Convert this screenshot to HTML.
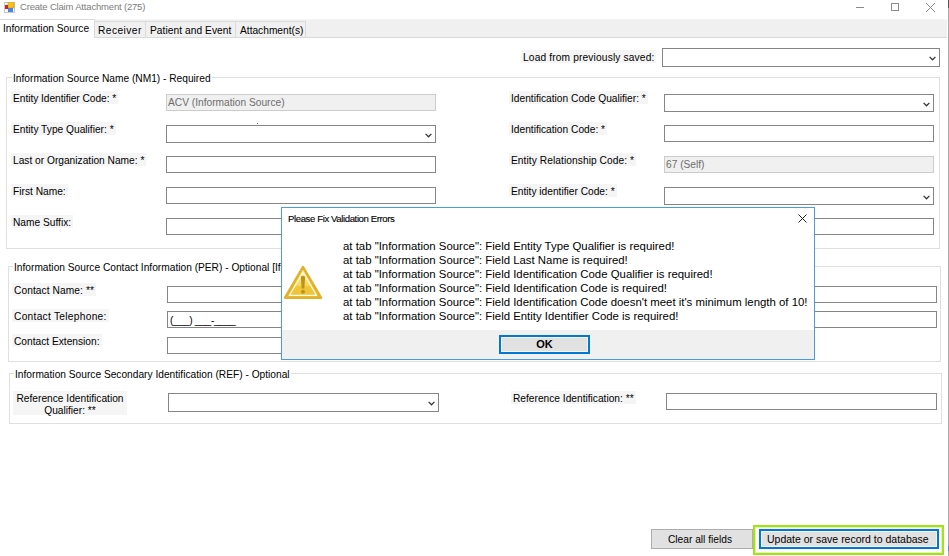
<!DOCTYPE html>
<html><head><meta charset="utf-8">
<style>
*{box-sizing:border-box;margin:0;padding:0}
html,body{width:949px;height:556px;overflow:hidden;background:#fff;font-family:"Liberation Sans",sans-serif;font-size:10.2px;color:#000}
.a{position:absolute}
.t{position:absolute;white-space:nowrap;line-height:12px}
.lbl{position:absolute;white-space:nowrap;line-height:12px;background:#f5f5f5;padding:2px 2px 0 2px;height:13px}
.tb{position:absolute;background:#fff;border:1px solid #858585}
.tbd{position:absolute;background:#f0f0f0;border:1px solid #cccccc;color:#6d6d6d;padding:2px 0 0 1px;line-height:12px;white-space:nowrap}
.cb{position:absolute;background:#fff;border:1px solid #858585}
.cb svg{position:absolute;right:3px;top:7px}
.gb{position:absolute;border:1px solid #dfdfdf}
.gt{position:absolute;background:#fff;padding:0 1px;white-space:nowrap;line-height:12px}
</style></head><body>
<!-- title bar -->
<svg class="a" style="left:4px;top:2px" width="11" height="11" viewBox="0 0 11 11">
<rect x="0.5" y="0.5" width="10" height="10" fill="#fafafa" stroke="#c8c8c8" stroke-width="1"/>
<rect x="4" y="0" width="6" height="6" fill="#f2c21a" stroke="#c9960c" stroke-width="0.6"/>
<rect x="1" y="3" width="3" height="4" fill="#c8261e"/>
<rect x="4" y="6" width="5" height="4" fill="#4a86e0"/>
</svg>
<div class="t" style="left:20px;top:1px;font-size:9.5px;color:#7d7d7d;letter-spacing:-0.18px">Create Claim Attachment (275)</div>
<div class="a" style="left:856px;top:7px;width:8px;height:1px;background:#8a8a8a"></div>
<div class="a" style="left:891px;top:3px;width:8px;height:8px;border:1px solid #8a8a8a"></div>
<svg class="a" style="left:926px;top:3px" width="9" height="9" viewBox="0 0 9 9"><path d="M0 0L9 9M9 0L0 9" stroke="#8a8a8a" stroke-width="1"/></svg>
<div class="a" style="left:948px;top:0;width:1px;height:556px;background:#a8a8a8"></div>
<div class="a" style="left:948px;top:546px;width:1px;height:5px;background:#5b8fc7"></div>
<div class="a" style="left:948px;top:0;width:1px;height:8px;background:#555"></div>

<!-- tab strip -->
<div class="a" style="left:0;top:19px;width:947px;height:19px;background:#f0f0f0;border-bottom:1px solid #dadada"></div>
<div class="a" style="left:0;top:19px;width:947px;height:1px;background:#f5f5f5"></div>
<div class="a" style="left:94px;top:21px;width:52px;height:17px;border:1px solid #dadada;border-bottom:none"></div>
<div class="a" style="left:145px;top:21px;width:91px;height:17px;border:1px solid #dadada;border-bottom:none"></div>
<div class="a" style="left:235px;top:21px;width:71px;height:17px;border:1px solid #dadada;border-bottom:none"></div>
<div class="a" style="left:0;top:19px;width:95px;height:19px;background:#fff;border:1px solid #dadada;border-bottom:none;border-left:none"></div>
<div class="t" style="left:3px;top:23px">Information Source</div>
<div class="t" style="left:98px;top:25px;letter-spacing:0.45px">Receiver</div>
<div class="t" style="left:150px;top:25px;letter-spacing:0.06px">Patient and Event</div>
<div class="t" style="left:240px;top:25px">Attachment(s)</div>

<!-- load -->
<div class="lbl" style="left:521px;top:50px;letter-spacing:0.15px">Load from previously saved:</div>
<div class="cb" style="left:662px;top:48px;width:278px;height:19px"><svg width="7" height="5" viewBox="0 0 7 5"><path d="M0.6 0.9L3.5 3.8L6.4 0.9" fill="none" stroke="#333" stroke-width="1.25"/></svg></div>

<!-- group 1 -->
<div class="gb" style="left:6px;top:77px;width:934px;height:172px"></div>
<div class="gt" style="left:12px;top:73px">Information Source Name (NM1) - Required</div>
<div class="lbl" style="left:11px;top:91px;letter-spacing:-0.04px">Entity Identifier Code: *</div>
<div class="lbl" style="left:11px;top:122px">Entity Type Qualifier: *</div>
<div class="lbl" style="left:11px;top:153px">Last or Organization Name: *</div>
<div class="lbl" style="left:11px;top:184px">First Name:</div>
<div class="lbl" style="left:11px;top:215px">Name Suffix:</div>
<div class="tbd" style="left:166px;top:94px;width:270px;height:17px">ACV (Information Source)</div>
<div class="cb" style="left:166px;top:125px;width:270px;height:18px"><svg width="7" height="5" viewBox="0 0 7 5"><path d="M0.6 0.9L3.5 3.8L6.4 0.9" fill="none" stroke="#333" stroke-width="1.25"/></svg></div>
<div class="a" style="left:257px;top:123px;width:1px;height:1px;background:#e33"></div>
<div class="tb" style="left:166px;top:156px;width:270px;height:17px"></div>
<div class="tb" style="left:166px;top:187px;width:270px;height:17px"></div>
<div class="tb" style="left:166px;top:218px;width:270px;height:17px"></div>

<div class="lbl" style="left:509px;top:91px">Identification Code Qualifier: *</div>
<div class="lbl" style="left:509px;top:122px">Identification Code: *</div>
<div class="lbl" style="left:509px;top:153px;letter-spacing:0.07px">Entity Relationship Code: *</div>
<div class="lbl" style="left:509px;top:184px">Entity identifier Code: *</div>
<div class="cb" style="left:664px;top:94px;width:270px;height:18px"><svg width="7" height="5" viewBox="0 0 7 5"><path d="M0.6 0.9L3.5 3.8L6.4 0.9" fill="none" stroke="#333" stroke-width="1.25"/></svg></div>
<div class="tb" style="left:664px;top:125px;width:270px;height:17px"></div>
<div class="tbd" style="left:664px;top:156px;width:270px;height:17px">67 (Self)</div>
<div class="cb" style="left:664px;top:187px;width:270px;height:18px"><svg width="7" height="5" viewBox="0 0 7 5"><path d="M0.6 0.9L3.5 3.8L6.4 0.9" fill="none" stroke="#333" stroke-width="1.25"/></svg></div>
<div class="tb" style="left:664px;top:218px;width:270px;height:17px"></div>

<!-- group 2 -->
<div class="gb" style="left:8px;top:266px;width:933px;height:96px"></div>
<div class="gt" style="left:13px;top:262px">Information Source Contact Information (PER) - Optional [If information is available]</div>
<div class="lbl" style="left:12px;top:283px;letter-spacing:0.08px">Contact Name: **</div>
<div class="lbl" style="left:12px;top:309px;letter-spacing:0.28px">Contact Telephone:</div>
<div class="lbl" style="left:12px;top:334px">Contact Extension:</div>
<div class="tb" style="left:167px;top:286px;width:270px;height:17px"></div>
<div class="tb" style="left:167px;top:311px;width:270px;height:17px;padding:3px 0 0 2px;line-height:12px;letter-spacing:-0.3px">(___) ___-____</div>
<div class="tb" style="left:167px;top:337px;width:270px;height:17px"></div>
<div class="tb" style="left:666px;top:286px;width:271px;height:17px"></div>
<div class="tb" style="left:666px;top:311px;width:271px;height:17px"></div>

<!-- group 3 -->
<div class="gb" style="left:9px;top:373px;width:933px;height:51px"></div>
<div class="gt" style="left:14px;top:369px">Information Source Secondary Identification (REF) - Optional</div>
<div class="lbl" style="left:13px;top:391px;width:114px;height:24px;text-align:center;white-space:normal;line-height:12.3px">Reference Identification<br>Qualifier: **</div>
<div class="cb" style="left:168px;top:393px;width:271px;height:19px"><svg width="7" height="5" viewBox="0 0 7 5"><path d="M0.6 0.9L3.5 3.8L6.4 0.9" fill="none" stroke="#333" stroke-width="1.25"/></svg></div>
<div class="lbl" style="left:511px;top:391px">Reference Identification: **</div>
<div class="tb" style="left:666px;top:393px;width:271px;height:17px"></div>

<!-- buttons -->
<div class="a" style="left:651px;top:529px;width:102px;height:20px;background:#e1e1e1;border:1px solid #adadad"></div>
<div class="t" style="left:668px;top:534px">Clear all fields</div>
<div class="a" style="left:753px;top:525px;width:191px;height:30px;border:2px solid #a4e01c;box-shadow:inset 0 0 0 1px #dff5a8"></div>
<div class="a" style="left:759px;top:529px;width:180px;height:20px;background:#e1e1e1;border:2px solid #0078d7"></div>
<div class="a" style="left:761px;top:531px;width:176px;height:16px;border:1px solid #f7f3ee"></div>
<div class="t" style="left:767px;top:533px;font-size:10.5px">Update or save record to database</div>

<!-- dialog -->
<div class="a" style="left:281px;top:207px;width:534px;height:153px;background:#fff;border:1px solid #4a9ae0"></div>
<div class="a" style="left:282px;top:330px;width:532px;height:29px;background:#f0f0f0"></div>
<div class="t" style="left:288px;top:213px;font-size:9.6px;letter-spacing:-0.4px;color:#000;-webkit-text-stroke:0.12px #000">Please Fix Validation Errors</div>
<svg class="a" style="left:798px;top:214px" width="9" height="9" viewBox="0 0 9 9"><path d="M0.5 0.5L8.5 8.5M8.5 0.5L0.5 8.5" stroke="#222" stroke-width="1"/></svg>
<div class="t" style="left:343px;top:240px;font-size:11.4px;line-height:13.9px">at tab "Information Source": Field Entity Type Qualifier is required!<br>at tab "Information Source": Field Last Name is required!<br>at tab "Information Source": Field Identification Code Qualifier is required!<br>at tab "Information Source": Field Identification Code is required!<br>at tab "Information Source": Field Identification Code doesn't meet it's minimum length of 10!<br>at tab "Information Source": Field Entity Identifier Code is required!</div>
<svg class="a" style="left:283px;top:265px" width="40" height="35" viewBox="0 0 40 35">
<defs><linearGradient id="wg" x1="0" y1="0" x2="0" y2="1"><stop offset="0" stop-color="#fdf3b0"/><stop offset="0.6" stop-color="#f6d55a"/><stop offset="0.62" stop-color="#f0c83a"/><stop offset="1" stop-color="#eec234"/></linearGradient></defs>
<path d="M20 2.2L38 32.8H2Z" fill="url(#wg)" stroke="#e2b12c" stroke-width="2.6" stroke-linejoin="round"/>
<path d="M20 7.5L33.6 30.4H6.4Z" fill="none" stroke="#fffbe6" stroke-width="1.1" stroke-linejoin="round"/>
<path d="M17.8 11.5Q20 10.5 22.2 11.5L21.3 23.5H18.7Z" fill="#b99419"/>
<circle cx="20" cy="26.8" r="2" fill="#b99419"/>
</svg>
<div class="a" style="left:499px;top:335px;width:91px;height:19px;background:#e1e1e1;border:2px solid #0078d7"></div>
<div class="a" style="left:501px;top:337px;width:87px;height:15px;border:1px solid #f7f3ee"></div>
<div class="t" style="left:499px;top:338px;width:91px;text-align:center;font-weight:bold;font-size:11px">OK</div>
</body></html>
